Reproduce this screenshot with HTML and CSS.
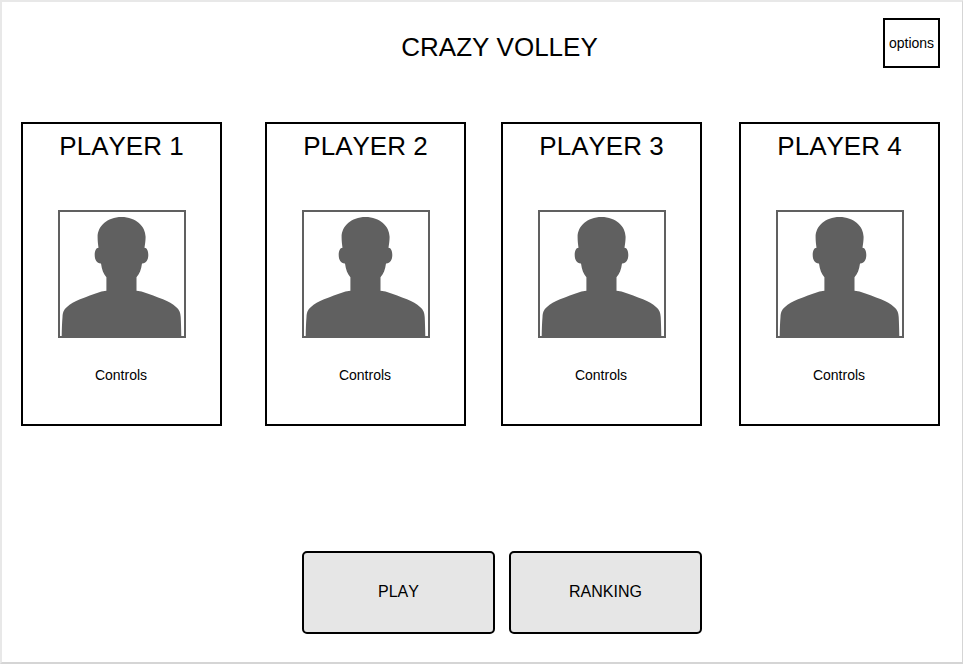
FILE: index.html
```html
<!DOCTYPE html>
<html lang="en">
<head>
<meta charset="utf-8">
<title>Crazy Volley</title>
<link rel="stylesheet" href="styles.css">
</head>
<body>
<svg class="defs" aria-hidden="true">
  <symbol id="avatar" viewBox="0 0 128 128">
    <path d="M63.5 7C49 7 39.5 16.500 39.600 27C39.600 31 40 34 40.500 37.700C38 37.800 36.700 41 36.700 45C36.700 50 39 53.700 43 53.500C43.800 59.500 45.500 64 48.400 67.300V80.700C46 80.800 44 81.200 42 82C35 84.400 28.500 86.700 22 89.300C16.500 91.700 12.500 93.800 8.700 97.200C5.500 100 4.800 102.500 4.500 107C4 113 3.800 119 3.700 127H123.300C123.200 119 123 113 122.700 107C122.400 102.500 121.500 100 118.300 97.200C114.500 93.800 110.500 91.700 105 89.300C98.500 86.700 92 84.400 85 82C83 81.200 81 80.800 78.500 80.700V67.300C81.500 64 83.200 59.500 84 53.500C88 53.700 90.300 50 90.300 45C90.300 41 89 37.800 86.500 37.700C87 34 87.600 31 87.600 27C87.700 16.500 78 7 63.500 7Z"/>
  </symbol>
</svg>
<main class="screen">
  <header class="top">
    <h1 class="title">CRAZY VOLLEY</h1>
    <button class="options">options</button>
  </header>
  <section class="players">
    <article class="card">
      <h2 class="name">PLAYER 1</h2>
      <div class="avatar"><svg><use href="#avatar"/></svg></div>
      <p class="controls">Controls</p>
    </article>
    <article class="card">
      <h2 class="name">PLAYER 2</h2>
      <div class="avatar"><svg><use href="#avatar"/></svg></div>
      <p class="controls">Controls</p>
    </article>
    <article class="card">
      <h2 class="name">PLAYER 3</h2>
      <div class="avatar"><svg><use href="#avatar"/></svg></div>
      <p class="controls">Controls</p>
    </article>
    <article class="card">
      <h2 class="name">PLAYER 4</h2>
      <div class="avatar"><svg><use href="#avatar"/></svg></div>
      <p class="controls">Controls</p>
    </article>
  </section>
  <nav class="actions">
    <button class="action">PLAY</button>
    <button class="action">RANKING</button>
  </nav>
</main>
</body>
</html>
```
FILE: styles.css
```css
* { box-sizing: border-box; margin: 0; padding: 0; }

body {
  font-family: "Liberation Sans", Arial, sans-serif;
  font-kerning: none;
  color: #000;
  background: #fff;
}

.defs { display: none; }

.screen {
  height: 664px;
  border: 2px solid #e8e8e8;
  border-right: 1px solid #d5d5d5;
  border-bottom-color: #d5d5d5;
  padding: 16px 22px 0 19px;
  display: flex;
  flex-direction: column;
}

.top {
  display: grid;
  grid-template-columns: 57px 1fr 57px;
  margin-bottom: 54px;
}

.title {
  grid-column: 2;
  padding: 14px 0 0 38px;
  font-size: 26px;
  font-weight: 400;
  line-height: 30px;
  text-align: center;
}

.options {
  height: 50px;
  border: 2px solid #000;
  background: #fff;
  font: 14px "Liberation Sans", Arial, sans-serif;
  color: #000;
}

.players {
  display: grid;
  grid-template-columns: 244px 236px 238px 201px;
}

.card {
  width: 201px;
  height: 304px;
  border: 2px solid #000;
  padding-top: 7px;
  text-align: center;
}

.name {
  font-size: 26px;
  font-weight: 400;
  line-height: 30px;
}

.avatar {
  width: 128px;
  height: 128px;
  margin: 49px 0 29px 35px;
  border: 2px solid #606060;
}

.avatar svg {
  display: block;
  width: 128px;
  height: 128px;
  margin: -2px;
  fill: #606060;
}

.controls {
  padding-right: 1px;
  font-size: 14px;
  line-height: 16px;
}

.actions {
  display: flex;
  gap: 14px;
  margin: 125px 0 0 281px;
}

.action {
  width: 193px;
  height: 83px;
  padding-bottom: 2px;
  border: 2px solid #000;
  border-radius: 5px;
  background: #e6e6e6;
  font: 16px "Liberation Sans", Arial, sans-serif;
  font-kerning: none;
  color: #000;
}
```
